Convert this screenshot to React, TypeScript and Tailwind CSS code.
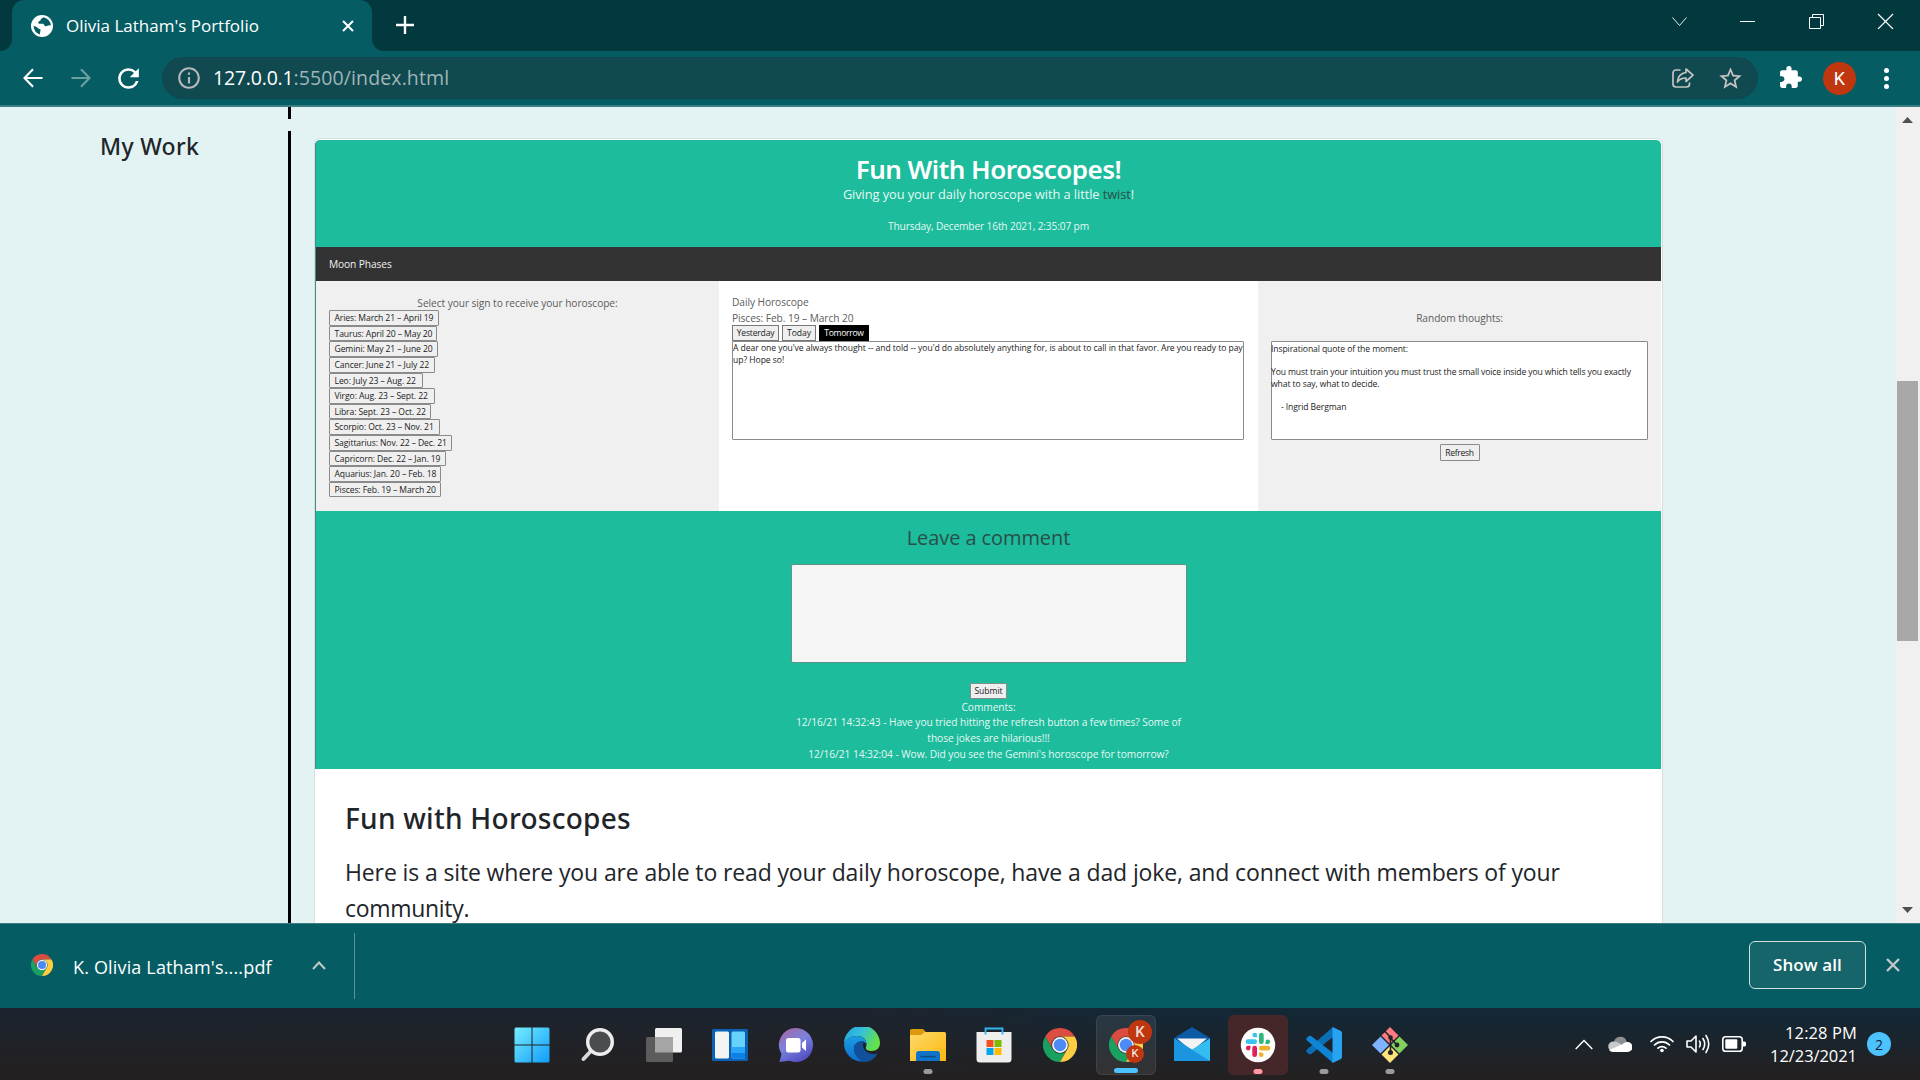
import type { ReactNode } from "react";
import { MdExtension, MdInfoOutline, MdRefresh, MdStarBorder } from "react-icons/md";

const signs: [string, string][] = [
  ["Aries: March 21 – April 19", "w-[110px]"],
  ["Taurus: April 20 – May 20", "w-[108px]"],
  ["Gemini: May 21 – June 20", "w-[109px]"],
  ["Cancer: June 21 – July 22", "w-[106px]"],
  ["Leo: July 23 – Aug. 22", "w-[94px]"],
  ["Virgo: Aug. 23 – Sept. 22", "w-[106px]"],
  ["Libra: Sept. 23 – Oct. 22", "w-[102px]"],
  ["Scorpio: Oct. 23 – Nov. 21", "w-[111px]"],
  ["Sagittarius: Nov. 22 – Dec. 21", "w-[123px]"],
  ["Capricorn: Dec. 22 – Jan. 19", "w-[117px]"],
  ["Aquarius: Jan. 20 – Feb. 18", "w-[112px]"],
  ["Pisces: Feb. 19 – March 20", "w-[112px]"],
];

function GlobeIcon() {
  return (
    <svg className="h-[22px] w-[22px]" viewBox="0 0 22 22">
      <circle cx="11" cy="11" r="11" fill="#fff" />
      <path
        d="M2.6 10.5c1.2 1.3 2.7 1 3.8 2 .9 1 1.600 1.700 3 1.700.4 1.800-.6 3-.4 5.300a8.800 8.800 0 0 1-6.400-9zM12.200 2.200c-.6 1.300-2.400 1-2.600 2.800-.2 1.600-2.400.8-2.400 2.600 0 2 3 .8 4.800 1.200 1.200.4 1 2.200 2.600 2.400 1.800.2 2.400-1.300 5.200-.7a8.800 8.800 0 0 0-7.600-8.300z"
        fill="#055d63"
      />
    </svg>
  );
}

function ChromeLogo({ className }: { className: string }) {
  return (
    <svg className={className} viewBox="0 0 48 48">
      <path d="M24 12H44.800A24 24 0 0 0 3.200 12L13.600 30A12 12 0 0 1 24 12Z" fill="#dc4d41" />
      <path d="M13.600 30L3.200 12A24 24 0 0 0 24 48L34.400 30A12 12 0 0 1 13.600 30Z" fill="#1aa15f" />
      <path d="M34.400 30L24 48A24 24 0 0 0 44.800 12H24A12 12 0 0 1 34.400 30Z" fill="#ffcd42" />
      <circle cx="24" cy="24" r="11.200" fill="#f4f4f4" />
      <circle cx="24" cy="24" r="8.800" fill="#4c8bf5" />
    </svg>
  );
}

function TabStrip() {
  return (
    <div className="flex h-[51px] shrink-0 bg-[#055d63]">
      <div className="w-3 rounded-br-[12px] bg-[#02393e]" />
      <div className="w-[360px] bg-linear-to-b from-[#02393e] from-50% to-[#055d63] to-50%">
        <div className="flex h-[51px] items-center rounded-t-[12px] bg-[#055d63] pl-[19px] text-[17px] text-white">
          <GlobeIcon />
          <span className="ml-[13px] flex-1 whitespace-nowrap leading-[51px]">Olivia Latham's Portfolio</span>
          <svg className="mr-[18px] h-3 w-3" viewBox="0 0 12 12" stroke="#fff" strokeWidth="2">
            <path d="M1 1l10 10M11 1L1 11" />
          </svg>
        </div>
      </div>
      <div className="flex flex-1 rounded-bl-[12px] bg-[#02393e] pl-[24px]">
        <svg className="mt-[16px] h-[18px] w-[18px]" viewBox="0 0 18 18" stroke="#fff" strokeWidth="2.400">
          <path d="M9 0v18M0 9h18" />
        </svg>
        <div className="ml-auto flex pt-[13px]">
          <svg className="h-4 w-[69px]" viewBox="0 0 69 16" fill="none" stroke="#fff">
            <path d="M28.500 4.500l7 8 7-8" opacity=".9" />
          </svg>
          <svg className="h-4 w-[69px]" viewBox="0 0 69 16" fill="none" stroke="#fff">
            <path d="M27 8.500h15" />
          </svg>
          <svg className="h-4 w-[69px]" viewBox="0 0 69 16" fill="none" stroke="#fff">
            <path d="M27.500 4.500h11v11h-11zM30.500 4.500v-3h11v11h-3" />
          </svg>
          <svg className="h-4 w-[69px]" viewBox="0 0 69 16" fill="none" stroke="#fff" strokeWidth="1.200">
            <path d="M27 1l15 15M42 1L27 16" />
          </svg>
        </div>
      </div>
    </div>
  );
}

function Toolbar() {
  return (
    <div className="flex h-14 shrink-0 items-start border-b-2 border-[#3a7d82] bg-[#055d63] pt-[6px]">
      <div className="flex h-[42px] w-[162px] items-center pl-[23px]">
        <svg className="h-5 w-5" viewBox="0 0 20 20" fill="none" stroke="#fff" strokeWidth="2.100">
          <path d="M19.500 10H1.800M10 1.200L1.500 10l8.500 8.800" />
        </svg>
        <svg className="ml-[28px] h-5 w-5" viewBox="0 0 20 20" fill="none" stroke="#6ba0a3" strokeWidth="2.100">
          <path d="M.500 10h17.700M10 1.200l8.500 8.800-8.500 8.800" />
        </svg>
        <MdRefresh className="ml-[22px] h-[31px] w-[31px] text-white" />
      </div>
      <div className="flex h-[42px] w-[1596px] items-center rounded-full bg-[#10494f] pl-[14px] pr-[13px]">
        <MdInfoOutline className="h-[26px] w-[26px] text-[#b3b9bc]" />
        <span className="ml-[11px] text-[19.5px] leading-[42px] tracking-[-0.2px] text-white">127.0.0.1</span>
        <span className="text-[19.5px] leading-[42px] tracking-[0.12px] text-[#9fb6b8]">:5500/index.html</span>
        <svg className="ml-auto h-[22px] w-[22px]" viewBox="0 0 22 22" fill="none" stroke="#c3c3c3" strokeWidth="1.700" strokeLinejoin="round">
          <path d="M8.500 3H4a3 3 0 0 0-3 3v11a3 3 0 0 0 3 3h10.500a3 3 0 0 0 3-3v-1.500" />
          <path d="M14 2l7 6.200-7 6.300V11c-4 0-6.500 1-8.500 4 .300-5 3-8.800 8.500-9.500z" />
        </svg>
        <MdStarBorder className="ml-[23px] mr-px h-[27px] w-[27px] text-[#c3c3c3]" />
      </div>
      <MdExtension className="ml-[20px] mr-[2px] mt-[8px] h-[25px] w-[25px] text-white" />
      <div className="ml-[18px] mt-[5px] flex h-[33px] w-[33px] items-center justify-center rounded-full bg-[#c0360f] font-['Roboto'] text-[18px] text-white">
        K
      </div>
      <div className="ml-[28px] mt-[11px] flex flex-col gap-[3px]">
        <span className="h-[5px] w-[5px] rounded-full bg-white" />
        <span className="h-[5px] w-[5px] rounded-full bg-white" />
        <span className="h-[5px] w-[5px] rounded-full bg-white" />
      </div>
    </div>
  );
}

function HoroscopeApp() {
  return (
    <div className="mr-px mt-px h-[629px] rounded-t-[5px] border-l border-[#3f8f86] bg-[#1cbc9c]">
      <header className="h-[107px] pt-[14px] text-center text-white">
        <h1 className="font-['Noto_Sans'] text-[26px] font-semibold leading-[30px] tracking-[-0.52px]">Fun With Horoscopes!</h1>
        <p className="text-[12.8px] leading-[20px] tracking-[-0.06px] text-[#e6f8f4]">
          Giving you your daily horoscope with a little <span className="text-[#2a4f49]">twist</span>!
        </p>
        <p className="mt-[13.5px] text-[10.2px] leading-[16px] tracking-[-0.15px] text-[#e6f8f4]">
          Thursday, December 16th 2021, 2:35:07 pm
        </p>
      </header>
      <nav className="flex h-[34px] items-center bg-[#333] pl-[13px] text-[10.2px] leading-[16px] tracking-[-0.1px] text-[#f2f2f2]">
        Moon Phases
      </nav>
      <main className="flex h-[230px] bg-white text-[10.2px] tracking-[-0.07px] text-[#5c5c5c]">
        <section className="w-[403px] bg-[#f0f0f0] pl-[13px] pr-[13px] pt-[13px]">
          <p className="h-[16.2px] text-center leading-[18px]">Select your sign to receive your horoscope:</p>
          {signs.map(([label, width]) => (
            <div key={label} className="h-[15.62px]">
              <div className={`${width} h-[15.6px] whitespace-nowrap rounded-[1px] border border-[#8a8a8a] bg-[#efefef] pl-[4.5px] text-[8.6px] leading-[14.8px] tracking-[-0.1px] text-[#222]`}>
                {label}
              </div>
            </div>
          ))}
        </section>
        <section className="w-[539px] pl-[13px] pt-[14px]">
          <p className="leading-[15.8px]">Daily Horoscope</p>
          <p className="h-[14.600px] leading-[15.6px]">Pisces: Feb. 19 – March 20</p>
          <div className="flex h-[15.6px] text-[8.6px] leading-[15px] text-[#222]">
            <span className="w-[47px] border border-[#777] bg-[#efefef] text-center tracking-[-0.2px]">Yesterday</span>
            <span className="ml-[3px] w-[34px] border border-[#777] bg-[#efefef] text-center">Today</span>
            <span className="ml-[3px] w-[50px] border border-black bg-black text-center tracking-[-0.3px] text-white">Tomorrow</span>
          </div>
          <div className="h-[99px] w-[512px] rounded-[1px] border border-[#8a8a8a] bg-white text-[8.6px] leading-[11.7px] text-[#222]">
            <p className="pt-[1.5px] tracking-[-0.055px]">
              <span className="whitespace-nowrap">
                A dear one you've always thought -- and told -- you'd do absolutely anything for, is about to call in that favor. Are you ready to pay
              </span>
              <br />
              up? Hope so!
            </p>
          </div>
        </section>
        <section className="flex-1 bg-[#f0f0f0] pl-[13px] pr-[13px] pt-[29px]">
          <p className="h-[15.2px] text-center leading-[16.5px]">Random thoughts:</p>
          <div className="mt-[16px] h-[99px] rounded-[1px] border border-[#8a8a8a] bg-white text-[8.6px] leading-[11.7px] tracking-[-0.1px] text-[#222]">
            <div className="-ml-px whitespace-pre pt-[1.5px]">
              <p>Inspirational quote of the moment:</p>
              <p className="mt-[11.7px] tracking-[-0.127px]">You must train your intuition you must trust the small voice inside you which tells you exactly</p>
              <p>what to say, what to decide.</p>
              <p className="mt-[11.7px] pl-[10px]">- Ingrid Bergman</p>
            </div>
          </div>
          <div className="mx-auto mt-[4px] h-[17px] w-[40px] rounded-[1px] border border-[#8a8a8a] bg-[#efefef] text-center text-[8.6px] leading-[16.500px] tracking-[-0.3px] text-[#222]">
            Refresh
          </div>
        </section>
      </main>
      <footer className="pt-[12px] text-center text-[10.2px] leading-[15.7px] tracking-[-0.05px] text-[#e6f8f4]">
        <h2 className="h-[29px] text-[20px] leading-[30px] tracking-[-0.085px] text-[#2a4f49]">Leave a comment</h2>
        <div className="mx-auto mt-[12px] h-[99px] w-[396px] rounded-[2px] border border-[#5f9488] bg-[#f5f5f5]" />
        <div className="mx-auto mt-[20px] h-[16px] w-[37px] rounded-[1px] border border-[#7f8f8c] bg-[#efefef] text-[8.6px] leading-[14.600px] text-[#222]">
          Submit
        </div>
        <p className="pt-[0.6px]">Comments:</p>
        <p>12/16/21 14:32:43 - Have you tried hitting the refresh button a few times? Some of</p>
        <p>those jokes are hilarious!!!</p>
        <p>12/16/21 14:32:04 - Wow. Did you see the Gemini's horoscope for tomorrow?</p>
      </footer>
    </div>
  );
}

function Page() {
  return (
    <div className="flex h-[816px] shrink-0 overflow-hidden bg-[#e3f3f3] text-[#212529]">
      <aside className="w-[288px]">
        <h3 className="pl-[100px] pt-[20px] font-['Noto_Sans'] text-[23px] font-medium leading-[38px] tracking-[0.3px]">My Work</h3>
      </aside>
      <div className="flex w-[3px] flex-col gap-3">
        <div className="h-3 bg-black" />
        <div className="flex-1 bg-black" />
      </div>
      <div className="ml-[23px] mt-[31px] h-[900px] w-[1349px] shrink-0 rounded-[6px] border border-[#d8dddd] bg-white">
        <HoroscopeApp />
        <div className="px-[30px] pt-[32px]">
          <h3 className="font-['Noto_Sans'] text-[28px] font-medium leading-[34px] tracking-[0.27px]">Fun with Horoscopes</h3>
          <p className="mt-[19px] text-[23px] leading-[36px] tracking-[-0.128px]">
            Here is a site where you are able to read your daily horoscope, have a dad joke, and connect with members of your
            <br />
            <span className="tracking-[-0.3px]">community.</span>
          </p>
        </div>
      </div>
      <div className="ml-auto flex w-[25px] flex-col items-center bg-[#f0f0f0] pt-[10px]">
        <svg className="h-[6px] w-[11px]" viewBox="0 0 11 6" fill="#505050">
          <path d="M0 6L5.500 0 11 6z" />
        </svg>
        <div className="mt-[258px] h-[260px] w-[21px] bg-[#a8a8a8]" />
        <svg className="mt-auto mb-[10px] h-[6px] w-[11px]" viewBox="0 0 11 6" fill="#505050">
          <path d="M0 0L5.500 6 11 0z" />
        </svg>
      </div>
    </div>
  );
}

function DownloadBar() {
  return (
    <div className="flex h-[85px] shrink-0 items-center border-t border-[#3a7d82] bg-[#055d63] text-white">
      <ChromeLogo className="-mt-[2px] ml-[31px] h-[22px] w-[22px]" />
      <span className="ml-[20px] w-[199px] whitespace-nowrap pt-[2px] text-[18px] leading-[26px] tracking-[0.16px]">K. Olivia Latham's....pdf</span>
      <svg className="-mt-px ml-[40px] h-[9px] w-[14px]" viewBox="0 0 14 9" fill="none" stroke="#c0c8c8" strokeWidth="2">
        <path d="M1 8l6-6.500L13 8" />
      </svg>
      <div className="ml-[28px] h-[66px] w-px bg-[#5a9296]" />
      <div className="-mt-[3px] ml-auto h-[48px] w-[117px] rounded-[6px] border border-[#d3e0e1] bg-[#16656b] text-center text-[17px] font-semibold leading-[46px] tracking-[0.1px]">
        Show all
      </div>
      <svg className="-mt-[2px] ml-[20px] mr-[20px] h-[14px] w-[14px]" viewBox="0 0 14 14" stroke="#c3c8c8" strokeWidth="2.400">
        <path d="M1 1l12 12M13 1L1 13" />
      </svg>
    </div>
  );
}

function TaskItem({ children, tile = "", dot = "" }: { children: ReactNode; tile?: string; dot?: string }) {
  return (
    <div className={`relative flex h-[60px] w-[60px] items-center justify-center rounded-[6px] ${tile}`}>
      {children}
      {dot && <span className={`absolute bottom-px left-1/2 h-[5px] -translate-x-1/2 rounded-full ${dot}`} />}
    </div>
  );
}

const icon = "h-9 w-9";

function Taskbar() {
  return (
    <div className="h-[72px] shrink-0 bg-linear-to-r from-[#1c242f] from-45% to-[#122837] to-60% text-white">
      <div className="flex h-full gap-[6px] bg-linear-to-b from-transparent to-[#242020] pl-[502px] pt-[7px]">
        <TaskItem>
          <svg className={icon} viewBox="0 0 36 36">
            <defs>
              <linearGradient id="win" x1="0" y1="0" x2="1" y2="1" gradientUnits="objectBoundingBox">
                <stop offset="0" stopColor="#76eefe" />
                <stop offset="1" stopColor="#0f9bfb" />
              </linearGradient>
            </defs>
            <path d="M2 .500h15.500v17H.500V2A1.500 1.500 0 0 1 2 .500zM18.500.500H34A1.500 1.500 0 0 1 35.500 2v15.500h-17zM.500 18.500h17v17H2A1.500 1.500 0 0 1 .500 34zM18.500 18.500h17V34a1.500 1.500 0 0 1-1.500 1.500H18.500z" fill="url(#win)" />
          </svg>
        </TaskItem>
        <TaskItem>
          <svg className={icon} viewBox="0 0 36 36">
            <path d="M11 24L3.500 32" stroke="#d5d7d9" strokeWidth="4" strokeLinecap="round" />
            <circle cx="20" cy="15" r="12.300" fill="#4a4c50" stroke="#ededed" strokeWidth="3.400" />
          </svg>
        </TaskItem>
        <TaskItem>
          <svg className={icon} viewBox="0 0 36 36">
            <rect x="9" y="1" width="27" height="24.500" rx="1.500" fill="#f0f0f0" />
            <rect x="0" y="10" width="27" height="25" rx="1.500" fill="#5c5c5c" />
            <path d="M9 10h18v15.500H9z" fill="#a5a5a5" />
          </svg>
        </TaskItem>
        <TaskItem>
          <svg className={icon} viewBox="0 0 36 36">
            <rect x="0" y="2" width="36" height="32" rx="1.500" fill="#0b62b4" />
            <rect x="3" y="4.500" width="14" height="27" rx="1.500" fill="#f4f4f4" />
            <rect x="19.500" y="4.500" width="13.500" height="27" rx="1.500" fill="#67d3fd" />
            <path d="M19.500 20H33v6H19.500z" fill="#28a5f7" />
            <path d="M19.500 26H33v4a1.500 1.500 0 0 1-1.500 1.500H21a1.500 1.500 0 0 1-1.500-1.500z" fill="#0f7fe8" />
          </svg>
        </TaskItem>
        <TaskItem>
          <svg className={icon} viewBox="0 0 36 36">
            <defs>
              <linearGradient id="chat" x1=".1" y1=".1" x2=".6" y2="1">
                <stop offset="0" stopColor="#a06bab" />
                <stop offset=".45" stopColor="#7b83dc" />
                <stop offset="1" stopColor="#5350c2" />
              </linearGradient>
            </defs>
            <path d="M18 1a17 17 0 1 1-6.500 32.700L1.500 35 3.500 27A17 17 0 0 1 18 1z" fill="url(#chat)" />
            <rect x="8" y="11" width="14.500" height="14.500" rx="2.500" fill="#fff" />
            <path d="M24 16l4-3.500v11.500l-4-3.500z" fill="#fff" />
          </svg>
        </TaskItem>
        <TaskItem>
          <svg className={icon} viewBox="0 0 36 36">
            <defs>
              <linearGradient id="edge1" x1="0" y1="0" x2="1" y2=".4">
                <stop offset="0" stopColor="#1f9fdd" />
                <stop offset=".5" stopColor="#35c1dc" />
                <stop offset="1" stopColor="#63e04a" />
              </linearGradient>
              <linearGradient id="edge2" x1="0" y1="0" x2="0" y2="1">
                <stop offset="0" stopColor="#1b9de2" />
                <stop offset="1" stopColor="#0c6fce" />
              </linearGradient>
            </defs>
            <path d="M0 17A18 18 0 0 1 36 16c0 5-3.500 8-8.500 8-4 0-6.500-1.800-5.500-4C24 14 20 9 13 9 7 9 2 12 0 17z" fill="url(#edge1)" />
            <path d="M0 18C1 12 7 9 13 9c6 0 9.500 4 9.500 8C18 12 10 15 10 22c0 7 7 12 14 11.500A18 18 0 0 1 0 18z" fill="url(#edge2)" />
            <path d="M10 22c0-6 6-9 10-7.500-2.500 4-.5 9.500 6 12 3 1 6 .5 7.500-.2-1.500 4-6 8-11.500 8.700C15 34.500 10 28.500 10 22z" fill="#11519c" />
          </svg>
        </TaskItem>
        <TaskItem dot="w-[9px] bg-[#9a9a9a]">
          <svg className={icon} viewBox="0 0 36 36">
            <defs>
              <linearGradient id="folder" x1="0" y1="0" x2="1" y2="1">
                <stop offset="0" stopColor="#ffd96b" />
                <stop offset="1" stopColor="#fbb90e" />
              </linearGradient>
            </defs>
            <path d="M1.500 2H13l3.500 3.500V12H0V3.500A1.500 1.500 0 0 1 1.500 2z" fill="#dc9a0c" />
            <path d="M0 8h11l4-3h19.500A1.500 1.500 0 0 1 36 6.500V34H0z" fill="url(#folder)" />
            <path d="M6 34v-7a3 3 0 0 1 3-3h18a3 3 0 0 1 3 3v7z" fill="#0f74c9" />
            <path d="M10.500 29.500h15" stroke="#0b4c86" strokeWidth="1.500" />
          </svg>
        </TaskItem>
        <TaskItem>
          <svg className={icon} viewBox="0 0 36 36">
            <path d="M.500 5h35v27a3.500 3.500 0 0 1-3.500 3.500H4A3.500 3.500 0 0 1 .500 32z" fill="#eeeeee" />
            <path d="M9.500 7.500V1.500h17v6" fill="none" stroke="#35b5ef" strokeWidth="1.800" />
            <path d="M10.500 13h7v7h-7z" fill="#f25022" />
            <path d="M18.500 13h7v7h-7z" fill="#7fba00" />
            <path d="M10.500 21h7v7h-7z" fill="#00a4ef" />
            <path d="M18.500 21h7v7h-7z" fill="#ffb900" />
          </svg>
        </TaskItem>
        <TaskItem>
          <ChromeLogo className="h-[34px] w-[34px]" />
        </TaskItem>
        <TaskItem tile="bg-white/8 border border-white/8" dot="w-6 bg-[#4cc2ff]">
          <ChromeLogo className="h-[34px] w-[34px]" />
          <span className="absolute left-[31px] top-[4px] flex h-6 w-6 items-center justify-center rounded-full bg-[#c0360f] font-['Roboto'] text-[15px] font-medium text-[#f0d9d2]">K</span>
          <span className="absolute left-[29px] top-[29px] flex h-[18px] w-[18px] items-center justify-center rounded-full bg-[#c0360f] font-['Roboto'] text-[11px] text-white">K</span>
        </TaskItem>
        <TaskItem>
          <svg className={icon} viewBox="0 0 36 36">
            <path d="M0 11L18 0l18 11v8H0z" fill="#0c59a4" />
            <path d="M3 11.500h30L18 24z" fill="#f3f3f3" />
            <path d="M0 11.500L18 22.500l18-11V34H0z" fill="#35bdf1" />
            <path d="M0 11.500L36 34H0z" fill="#1b95e0" />
          </svg>
        </TaskItem>
        <TaskItem tile="bg-[#452729]" dot="w-[9px] bg-[#ff99a4]">
          <svg className={icon} viewBox="0 0 36 36">
            <circle cx="18" cy="18" r="17.200" fill="#fdfdfd" />
            <g fill="#36c5f0">
              <path d="M17 5.700v4.600h-2.300a2.300 2.300 0 1 1 2.300-2.300z" />
              <rect x="5.700" y="12.300" width="11.300" height="4.700" rx="2.300" />
            </g>
            <g fill="#2eb67d">
              <rect x="19" y="5.700" width="4.700" height="11.300" rx="2.300" />
              <path d="M25.500 17v-2.300a2.300 2.300 0 1 1 2.300 2.300z" />
            </g>
            <g fill="#e01e5a">
              <rect x="12.300" y="18.800" width="4.700" height="11.300" rx="2.300" />
              <path d="M10.500 18.800v2.300a2.300 2.300 0 1 1-2.300-2.300z" />
            </g>
            <g fill="#ecb22e">
              <rect x="19" y="18.800" width="11.300" height="4.700" rx="2.300" />
              <path d="M19 25.400h2.300a2.300 2.300 0 1 1-2.300 2.300z" />
            </g>
          </svg>
        </TaskItem>
        <TaskItem dot="w-[9px] bg-[#9a9a9a]">
          <svg className={icon} viewBox="0 0 36 36">
            <path d="M27 0L1 22.500Q-.500 24 1 25.500L3 27q1 .600 2.200 0L27 10z" fill="#0b6fb8" />
            <path d="M27 36L1 13.500Q-.500 12 1 10.500L3 9q1-.600 2.200 0L27 26z" fill="#1084d4" />
            <path d="M26.500 0L34.500 3.800Q36 4.500 36 6v24q0 1.500-1.500 2.200L26.500 36z" fill="#27a3f1" />
          </svg>
        </TaskItem>
        <TaskItem dot="w-[9px] bg-[#9a9a9a]">
          <svg className={icon} viewBox="0 0 36 36">
            <path d="M18 0l8.500 8.500L18 17 9.500 8.500z" fill="#ff7b80" />
            <path d="M8.500 9.500L17 18l-8.500 8.500L0 18z" fill="#80b3ff" />
            <path d="M27.500 9.500L36 18l-8.500 8.500L19 18z" fill="#85d05e" />
            <path d="M18 19l8.500 8.500L18 36l-8.500-8.500z" fill="#ffe27a" />
            <path d="M12.500 4l6 6v15M18.500 11l6.500 7" stroke="#1f2226" strokeWidth="1.600" fill="none" />
            <circle cx="18.500" cy="10.500" r="2.300" fill="#1f2226" />
            <circle cx="25" cy="18" r="2.400" fill="#1f2226" />
            <circle cx="18.500" cy="25.500" r="2.500" fill="#1f2226" />
          </svg>
        </TaskItem>
        <div className="-mt-[7px] ml-auto flex items-center">
          <svg className="h-[11px] w-[18px]" viewBox="0 0 18 11" fill="none" stroke="#fff" strokeWidth="1.500">
            <path d="M.700 10L9 1.500 17.300 10" />
          </svg>
          <svg className="ml-[15px] h-4 w-6" viewBox="0 0 24 16">
            <path d="M6 6a6.500 6.500 0 0 1 12.500-1L20 9l-9 3z" fill="#8e8f90" />
            <path d="M5.500 5.500Q8.500 5 11 7l5 3-8 5.500H5a5 5 0 0 1 .5-10z" fill="#c8c9ca" />
            <path d="M14 8.500q3-3 5.500-2.500a5 5 0 0 1 0 10H5q-2.500 0-4-2z" fill="#fff" />
          </svg>
          <svg className="ml-[18px] h-[18px] w-6" viewBox="0 0 24 18" fill="none" stroke="#fff" strokeWidth="1.700" strokeLinecap="round">
            <path d="M1 6.500a15.500 15.500 0 0 1 22 0M4.500 10a10.500 10.500 0 0 1 15 0M8 13.200a5.800 5.800 0 0 1 8 0" />
            <circle cx="12" cy="15.500" r="1.800" fill="#fff" stroke="none" />
          </svg>
          <svg className="ml-[12px] h-5 w-6" viewBox="0 0 24 20" fill="none" stroke="#fff" strokeWidth="1.600" strokeLinecap="round" strokeLinejoin="round">
            <path d="M1 7v6h4l5 5V2L5 7zM13.500 7.200q1.600 2.800 0 5.600M17 4.500q3.400 5.500 0 11M20 1.500q5.500 8.500 0 17" />
          </svg>
          <svg className="ml-[12px] h-4 w-6" viewBox="0 0 24 16">
            <rect x=".800" y=".800" width="19.400" height="14.400" rx="2.800" fill="none" stroke="#fff" strokeWidth="1.600" />
            <rect x="3.300" y="3.300" width="12" height="9.400" rx="1" fill="#fff" />
            <path d="M21 5.500h1.500a1.500 1.500 0 0 1 1.500 1.500v2a1.500 1.500 0 0 1-1.500 1.500H21z" fill="#fff" />
          </svg>
          <div className="ml-[24px] w-[87px] text-right text-[16.5px] leading-[23px]">
            <p className="tracking-[0.1px]">12:28 PM</p>
            <p className="tracking-[-0.06px]">12/23/2021</p>
          </div>
          <div className="ml-[10px] mr-[29px] flex h-6 w-6 items-center justify-center rounded-full bg-[#4cc2ff] text-[14px] text-[#10222d]">
            2
          </div>
        </div>
      </div>
    </div>
  );
}

export default function App() {
  return (
    <div className="flex h-[1080px] w-[1920px] flex-col overflow-hidden font-['Open_Sans',sans-serif]">
      <TabStrip />
      <Toolbar />
      <Page />
      <DownloadBar />
      <Taskbar />
    </div>
  );
}
